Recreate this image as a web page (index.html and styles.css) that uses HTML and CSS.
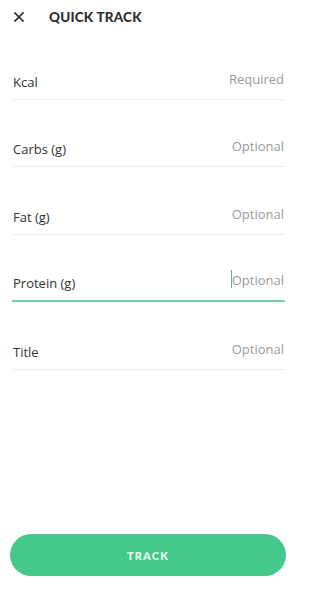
FILE: index.html
```html
<!DOCTYPE html>
<html>
<head>
<meta charset="utf-8">
<link rel="stylesheet" href="styles.css">
</head>
<body>
<div class="screen">
  <header class="header">
    <svg class="close" width="10" height="10" viewBox="0 0 10 10"><path d="M1 1L9 9M9 1L1 9" stroke="#2b2b2b" stroke-width="1.7" stroke-linecap="square"/></svg>
    <span class="title">QUICK TRACK</span>
  </header>
  <div class="form">
    <div class="row"><span class="label">Kcal</span><span class="ph">Required</span></div>
    <div class="row"><span class="label">Carbs (g)</span><span class="ph">Optional</span></div>
    <div class="row"><span class="label">Fat (g)</span><span class="ph">Optional</span></div>
    <div class="row active"><span class="label">Protein (g)</span><span class="ph"><span class="caret"></span>Optional</span></div>
    <div class="row"><span class="label">Title</span><span class="ph">Optional</span></div>
  </div>
  <button class="track">TRACK</button>
</div>
</body>
</html>
```
FILE: styles.css
```css
html, body {
  margin: 0;
  padding: 0;
  background: #ffffff;
}
.screen {
  width: 298px;
  height: 600px;
  display: flex;
  flex-direction: column;
  font-family: "Open Sans", "Liberation Sans", sans-serif;
  color: #333333;
}
.header {
  display: flex;
  align-items: center;
  height: 34px;
  padding-left: 14px;
}
.close {
  display: block;
  margin-top: -1px;
}
.title {
  margin-left: 25px;
  font-family: Lato, sans-serif;
  font-weight: 900;
  font-size: 13.5px;
  letter-spacing: 0.2px;
  color: #2e2e2e;
}
.form {
  display: flex;
  flex-direction: column;
  margin: 0 13px 0 12px;
}
.row {
  height: 67.5px;
  box-sizing: border-box;
  display: flex;
  justify-content: space-between;
  align-items: flex-end;
  padding: 0 1px 8px 1px;
  border-bottom: 1px solid #eeeeee;
}
.row:first-child {
  height: 65.5px;
}
.label {
  font-size: 13px;
  color: #333333;
}
.ph {
  position: relative;
  font-size: 13px;
  color: #9a9a9a;
  margin-bottom: 3px;
}
.row.active {
  border-bottom: 2px solid #74cbaa;
}
.caret {
  position: absolute;
  left: -1px;
  top: -1px;
  width: 1.5px;
  height: 18px;
  background: #4fb894;
}
.track {
  margin: auto 12px 24px 10px;
  height: 42px;
  border: none;
  border-radius: 21px;
  background: #45c98a;
  color: #eafbf2;
  font-family: Lato, sans-serif;
  font-weight: 900;
  font-size: 11px;
  letter-spacing: 1.2px;
  padding: 0;
}
```
